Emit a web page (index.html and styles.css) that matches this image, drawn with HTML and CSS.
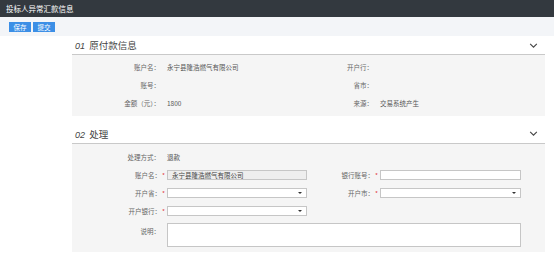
FILE: index.html
```html
<!DOCTYPE html>
<html lang="zh-CN">
<head>
    <meta charset="UTF-8">
    <title>投标人异常汇款信息</title>
    <link rel="stylesheet" href="styles.css">
</head>
<body>
    <div class="topbar">投标人异常汇款信息</div>
    <div class="toolbar">
        <button type="button" class="button">保存</button>
        <button type="button" class="button">提交</button>
    </div>

    <div class="content">
        <div class="section">
            <div class="section-head">
                <span class="title"><i>01</i> 原付款信息</span>
                <svg class="chevron" viewBox="0 0 10 6" width="9" height="5"><path d="M1 1 L5 5 L9 1" fill="none" stroke="#444" stroke-width="1.3"/></svg>
            </div>
            <div class="section-body info">
                <label>账户名：</label><span class="value">永宁县隆浩燃气有限公司</span>
                <label>开户行：</label><span class="value"></span>
                <label>账号：</label><span class="value"></span>
                <label>省市：</label><span class="value"></span>
                <label>金额（元）：</label><span class="value">1800</span>
                <label>来源：</label><span class="value">交易系统产生</span>
            </div>
        </div>

        <div class="section">
            <div class="section-head">
                <span class="title"><i>02</i> 处理</span>
                <svg class="chevron" viewBox="0 0 10 6" width="9" height="5"><path d="M1 1 L5 5 L9 1" fill="none" stroke="#444" stroke-width="1.3"/></svg>
            </div>
            <div class="section-body form">
                <label class="plain">处理方式：</label><span class="value wide">退款</span>

                <label>账户名：<b>*</b></label>
                <input type="text" class="field" value="永宁县隆浩燃气有限公司" disabled>
                <label>银行账号：<b>*</b></label>
                <input type="text" class="field">

                <label>开户省：<b>*</b></label>
                <div class="field select"></div>
                <label>开户市：<b>*</b></label>
                <div class="field select"></div>

                <label>开户银行：<b>*</b></label>
                <div class="field select"></div>
                <span></span><span></span>

                <label class="plain top">说明：</label>
                <textarea class="field note"></textarea>
            </div>
        </div>
    </div>
</body>
</html>
```

FILE: styles.css
```css
body {
    margin: 0;
    font-family: "Noto Sans CJK SC", "Liberation Sans", sans-serif;
    color: #333;
    background: #fff;
}
.topbar {
    height: 17px;
    line-height: 17px;
    padding-left: 6px;
    background: #33393f;
    color: #fff;
    font-size: 7.5px;
}
.toolbar {
    height: 19px;
    background: #f3f5f8;
    display: flex;
    align-items: center;
    gap: 2px;
    padding-left: 9px;
}
.button {
    width: 22px;
    height: 10px;
    padding: 0;
    border: none;
    background: #3c8fe6;
    color: #fff;
    font-family: inherit;
    font-size: 6.5px;
    line-height: 10px;
    margin-top: 1px;
}
.content {
    margin-left: 72px;
    width: 473px;
}
.section + .section {
    margin-top: 8px;
}
.section-head {
    height: 18px;
    border-bottom: 1px solid #c9c9c9;
    display: flex;
    align-items: center;
    justify-content: space-between;
    padding: 0 7px 0 3px;
}
.section + .section .section-head {
    height: 19px;
}
.title {
    font-size: 9.5px;
    color: #444;
}
.title i {
    font-family: "Liberation Sans", sans-serif;
    font-size: 9px;
    margin-right: 2px;
}
.section-body {
    background: #f5f5f5;
    display: grid;
    grid-template-columns: 95px 140px 73px 141px;
    grid-auto-rows: 18px;
    align-items: center;
    font-size: 6.5px;
}
.info {
    padding: 3px 0 4px;
}
.form {
    grid-template-rows: 18px 18px 18px 18px auto;
    padding: 4px 0 5px;
}
label {
    text-align: right;
    color: #666;
    padding-right: 7px;
    white-space: nowrap;
}
.form label {
    padding-right: 2px;
}
.form label.plain {
    padding-right: 7px;
}
label b {
    color: #e2393c;
    font-weight: normal;
    margin-left: 1px;
}
.value {
    color: #555;
}
.wide {
    grid-column: 2 / 5;
}
.field {
    box-sizing: border-box;
    height: 10px;
    width: 100%;
    margin: 0;
    padding: 0 4px;
    border: 1px solid #c6c6c6;
    background: #fff;
    font-family: inherit;
    font-size: 6.5px;
    color: #444;
}
.field:disabled {
    background: #eeeeee;
    color: #444;
}
.select {
    position: relative;
}
.select::after {
    content: "";
    position: absolute;
    right: 4px;
    top: 3px;
    border-left: 2px solid transparent;
    border-right: 2px solid transparent;
    border-top: 2px solid #333;
}
.top {
    align-self: start;
    padding-top: 6px;
}
.note {
    grid-column: 2 / 5;
    height: 24px;
    align-self: start;
    margin-top: 3px;
    resize: none;
}
```
